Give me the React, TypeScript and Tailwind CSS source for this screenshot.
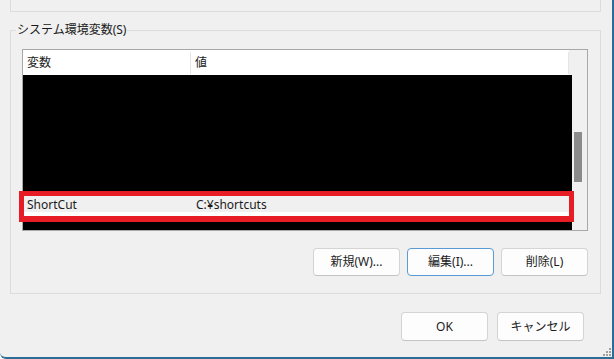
import React from "react";

const font = { fontFamily: '"Noto Sans", "Noto Sans CJK JP", sans-serif' };

function Btn({ children, focused }: { children: React.ReactNode; focused?: boolean }) {
  return (
    <button
      className={
        focused
          ? "w-[87px] h-[28px] rounded-[4px] border border-[#5a9ad6] bg-[#fdfdfd] text-[12px] text-[#1b1b1b] flex items-center justify-center"
          : "w-[87px] h-[28px] rounded-[4px] border border-[#d4d4d4] border-b-[#c4c4c4] bg-[#fdfdfd] text-[12px] text-[#1b1b1b] flex items-center justify-center"
      }
    >
      {children}
    </button>
  );
}

export default function App() {
  return (
    <div
      style={font}
      className="relative w-[614px] h-[359px] bg-[#f0f0f0] border-r-2 border-b-2 border-[#2a6e98] rounded-bl-[6px] overflow-hidden text-[#1b1b1b]"
    >
      <div className="ml-[10px] mr-[11px] h-[12px] border-l border-r border-b border-[#dcdcdc]" />
      <fieldset className="mt-[10px] ml-[10px] mr-[11px] border border-[#dcdcdc]">
        <legend className="ml-[5px] px-[1px] text-[12px] leading-[16px]">システム環境変数(S)</legend>
        <div className="mt-[11px] ml-[11px] w-[566px] h-[182px] border border-[#a8a8a8] flex">
          <div className="w-[549px] flex flex-col">
            <div className="h-[25px] bg-white flex items-center text-[12px] mr-[3px]">
              <div className="w-[167px] pl-[4px] h-full flex items-center">変数</div>
              <div className="w-px h-[22px] bg-[#e5e5e5]" />
              <div className="flex-1 pl-[4px]">値</div>
              <div className="w-px h-[22px] bg-[#e5e5e5]" />
            </div>
            <div className="h-[116px] bg-black" />
            <div className="h-[31px] -ml-[4px] -mr-[2px] border-[5px] border-b-[6px] border-[#e81c24] flex flex-col relative z-10">
              <div className="h-[16px] pt-[2px] bg-[#f0f0f0] flex items-center text-[12px]">
                <div className="w-[172px] pl-[3px]">ShortCut</div>
                <div>C:¥shortcuts</div>
              </div>
              <div className="flex-1 bg-white" />
            </div>
            <div className="h-[8px] bg-black" />
          </div>
          <div className="w-[15px] bg-[#f0f0f0] pt-[82px]">
            <div className="ml-[2px] w-[8px] h-[50px] bg-[#8b8b8b]" />
          </div>
        </div>
        <div className="mt-[17px] mb-[17px] ml-[11px] w-[566px] flex justify-end gap-[7px]">
          <Btn>新規(W)...</Btn>
          <Btn focused>編集(I)...</Btn>
          <Btn>削除(L)</Btn>
        </div>
      </fieldset>
      <div className="mt-[18px] mr-[28px] flex justify-end gap-[9px]">
        <button className="w-[87px] h-[29px] rounded-[4px] border border-[#d4d4d4] border-b-[#c4c4c4] bg-[#fdfdfd] text-[12px] flex items-center justify-center">OK</button>
        <button className="w-[87px] h-[29px] rounded-[4px] border border-[#d4d4d4] border-b-[#c4c4c4] bg-[#fdfdfd] text-[12px] flex items-center justify-center">キャンセル</button>
      </div>
      <svg className="absolute right-[1px] bottom-[1px]" width="9" height="9" viewBox="0 0 9 9">
        <rect x="7" y="1" width="2" height="2" fill="#a0a0a0" />
        <rect x="4" y="4" width="2" height="2" fill="#a0a0a0" />
        <rect x="7" y="4" width="2" height="2" fill="#a0a0a0" />
        <rect x="1" y="7" width="2" height="2" fill="#a0a0a0" />
        <rect x="4" y="7" width="2" height="2" fill="#a0a0a0" />
        <rect x="7" y="7" width="2" height="2" fill="#a0a0a0" />
      </svg>
    </div>
  );
}
